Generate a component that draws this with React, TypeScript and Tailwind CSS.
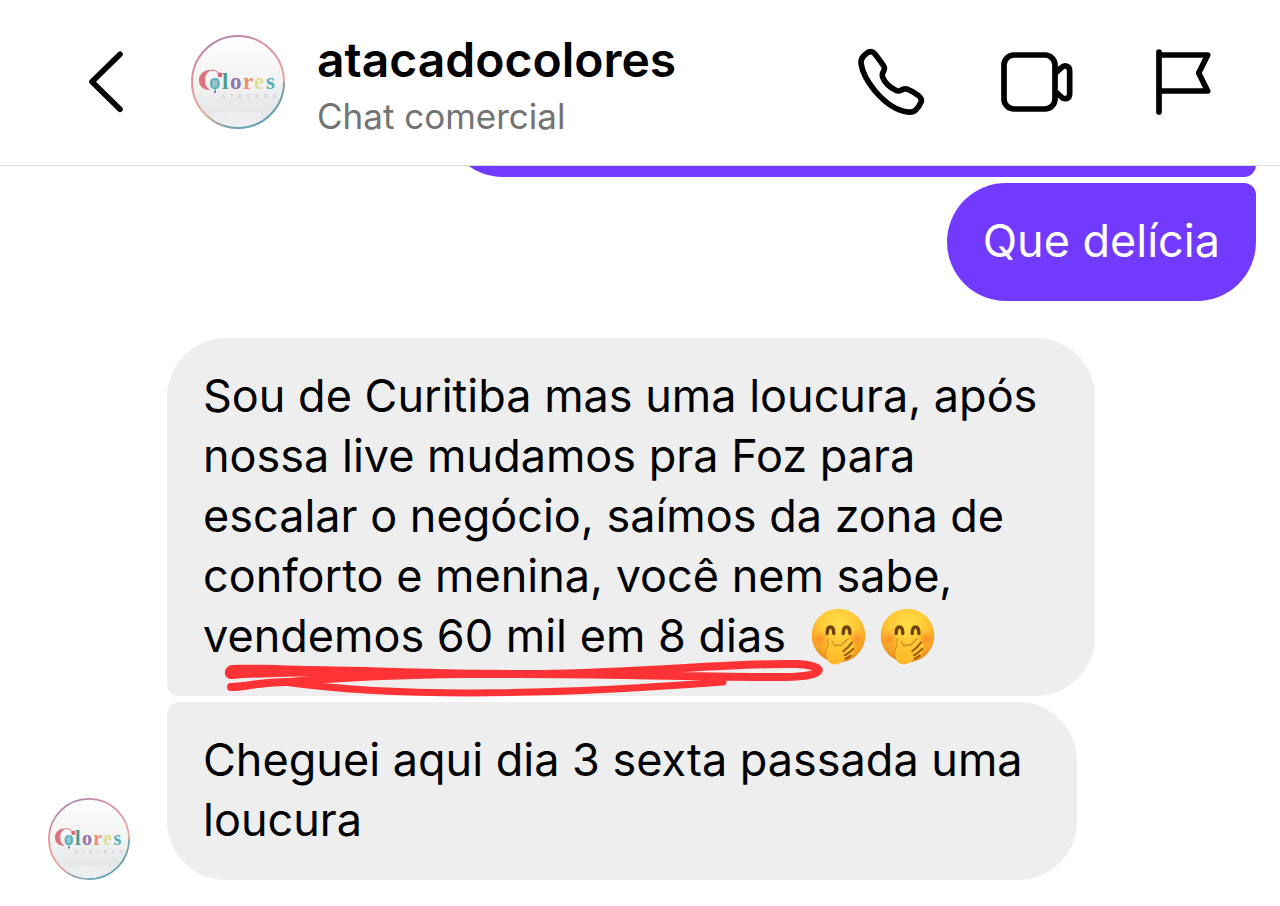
import { useId, type ReactNode } from "react";
import clsx from "clsx";

function Avatar({ className }: { className: string }) {
  const id = useId();

  return (
    <svg viewBox="0 0 94 94" className={clsx("shrink-0", className)} role="img" aria-label="Colores">
      <defs>
        <linearGradient id={`${id}ring`} x1="0.2" y1="0" x2="0.6" y2="1">
          <stop offset="0" stopColor="#a884b4" />
          <stop offset="0.25" stopColor="#dd8f9a" />
          <stop offset="0.7" stopColor="#e6a99a" />
          <stop offset="1" stopColor="#5fa3b5" />
        </linearGradient>
        <linearGradient id={`${id}sky`} x1="0" y1="0" x2="0" y2="1">
          <stop offset="0" stopColor="#fdfdfd" />
          <stop offset="0.5" stopColor="#f3f3f4" />
          <stop offset="0.8" stopColor="#e6e7e8" />
          <stop offset="1" stopColor="#eff0f1" />
        </linearGradient>
      </defs>
      <circle cx="47" cy="47" r="46" fill={`url(#${id}sky)`} stroke={`url(#${id}ring)`} strokeWidth="2" />
      <path d="M93 47A46 46 0 0 1 47 93" fill="none" stroke="#6ba5b4" strokeWidth="1.6" />
      <path
        d="M22 80c5-4 9-3 12-1 4-4 10-4 13 0 5-3 8-2 11 0 4-3 9-2 13 1-12 9-36 10-49 0z"
        fill="#f1f2f3"
        opacity="0.5"
      />
      <path d="M21 35C12 34 8 40 8 45c0 6 4 10 11 10-4-3-5-6-5-10 0-5 2-8 7-10z" fill="#e0717c" />
      <path d="M20 35c4 0 6 1 8 4" fill="none" stroke="#dd6470" strokeWidth="1" />
      <circle cx="29" cy="40" r="2.4" fill="#dd6470" />
      <text y="54" fontFamily="Liberation Serif, serif" fontWeight="bold" fontSize="23">
        <tspan x="18" fill="#5bb3c0">o</tspan>
        <tspan x="31" fill="#4e9a92">l</tspan>
        <tspan x="39" fill="#9273a9">o</tspan>
        <tspan x="52" fill="#ed8f6c">r</tspan>
        <tspan x="63" fill="#dfdf96">e</tspan>
        <tspan x="75" fill="#53b1bb">s</tspan>
      </text>
      <path d="M24 44v12" stroke="#4a9fb0" strokeWidth="1.2" />
      <circle cx="24" cy="57" r="1" fill="#456" />
      <text
        x="31 39 47 56 64 73 82"
        y="63"
        fontFamily="Liberation Sans, sans-serif"
        fontSize="5"
        fill="#c0c3ca"
      >
        ATACADO
      </text>
    </svg>
  );
}

function Icon({ children }: { children: ReactNode }) {
  return (
    <svg
      viewBox="0 0 216 216"
      className="size-[72px]"
      fill="none"
      stroke="#000"
      strokeWidth="17"
      strokeLinecap="round"
      strokeLinejoin="round"
      aria-hidden="true"
    >
      {children}
    </svg>
  );
}

function GiggleEmoji() {
  const id = useId();

  return (
    <svg viewBox="0 0 164 170" className="inline-block h-[57px] w-[55px]" role="img" aria-label="🤭">
      <defs>
        <radialGradient id={`${id}face`} cx="0.5" cy="0.3" r="0.7">
          <stop offset="0" stopColor="#ffe04a" />
          <stop offset="0.5" stopColor="#ffc935" />
          <stop offset="0.85" stopColor="#f6a023" />
          <stop offset="1" stopColor="#df8413" />
        </radialGradient>
        <radialGradient id={`${id}cheek`}>
          <stop offset="0" stopColor="#fb7b22" stopOpacity="0.7" />
          <stop offset="1" stopColor="#fb8b22" stopOpacity="0" />
        </radialGradient>
        <linearGradient id={`${id}hand`} x1="0.6" y1="0" x2="0.3" y2="1">
          <stop offset="0" stopColor="#ffcf3a" />
          <stop offset="1" stopColor="#ffb626" />
        </linearGradient>
      </defs>
      <circle cx="82" cy="82" r="80" fill={`url(#${id}face)`} />
      <circle cx="28" cy="92" r="27" fill={`url(#${id}cheek)`} />
      <circle cx="136" cy="92" r="27" fill={`url(#${id}cheek)`} />
      <path
        d="M48 76c0-26 20-26 20 0M96 76c0-26 20-26 20 0"
        fill="none"
        stroke="#704212"
        strokeWidth="10"
        strokeLinecap="round"
      />
      <path
        d="M53 90c-6 0-4 13-2 22-9 13-12 28-3 42 7 17 34 19 45 5 12-7 25-14 32-25 5-7-1-12-7-8 10-10 15-17 9-21-4-3-10 4-17 10 9-11 13-19 6-22-6-3-16 10-26 21-8-6-13-4-19-1-4-12-11-23-18-23z"
        fill={`url(#${id}hand)`}
      />
      <path d="M53 91c-5 3-3 13-1 20-9 13-12 28-4 42" fill="none" stroke="#d98a1c" strokeWidth="3" />
      <path d="M62 98c4 5 6 11 9 16 6-5 12-5 18-2 9-8 15-17 24-21" fill="none" stroke="#c98020" strokeWidth="3" />
      <path
        d="M122 103c-7 11-16 19-26 26M126 122c-7 8-16 14-25 19M118 142c-5 4-10 7-15 9"
        fill="none"
        stroke="#9a5a12"
        strokeWidth="6"
        strokeLinecap="round"
      />
    </svg>
  );
}

function MarkerUnderline() {
  return (
    <svg
      viewBox="220 655 610 45"
      className="absolute top-[317px] left-[53px] z-10 h-[45px] w-[610px]"
      fill="none"
      stroke="#ff3335"
      strokeWidth="8"
      strokeLinecap="round"
      strokeLinejoin="round"
      aria-hidden="true"
    >
      <path d="M231 671C320 667 430 675 540 674C640 673 730 663 795 664C829 665 827 677 785 677C700 677 600 674 520 674C430 673 340 677 290 682C260 681 250 687 231 687" />
      <path d="M284 682C390 697 540 696 723 682" strokeWidth="7" />
      <path
        d="M232 665C290 663 370 671 470 671V677C380 678 300 674 232 679C222 679 223 666 232 665Z"
        fill="#ff3335"
        stroke="none"
      />
    </svg>
  );
}

interface BubbleProps {
  className: string;
  children?: ReactNode;
}

function Bubble({ className, children }: BubbleProps) {
  return (
    <div className={clsx("relative px-9 pt-7 pb-[30px] text-[45px] leading-[60px]", className)}>
      {children}
    </div>
  );
}

export default function App() {
  return (
    <div className="min-h-screen bg-white font-['Inter',sans-serif] text-black">
      <header className="flex h-[166px] items-center border-b border-[#dcdcdc] pr-[61px] pb-[2px] pl-[70px]">
        <button type="button" aria-label="Voltar">
          <Icon>
            <path d="M150 25L66 107L150 190" />
          </Icon>
        </button>
        <Avatar className="ml-[49px] size-[94px]" />
        <div className="ml-8 min-w-0 flex-1 pt-1">
          <h1 className="text-[48px] leading-[64px] font-semibold">atacadocolores</h1>
          <p className="text-[35px] leading-[48px] text-[#737373]">Chat comercial</p>
        </div>
        <div className="flex shrink-0 gap-[74px]">
          <button type="button" aria-label="Ligar">
            <Icon>
              <path d="M48 17C55 17 61 25 66 32L85 58C90 65 89 70 86 75C82 82 80 87 83 94C90 110 105 124 121 132C127 136 132 136 138 133C145 128 151 128 158 130C169 134 179 140 188 147C199 155 201 161 198 169C194 179 188 187 181 193C176 198 168 199 158 198C125 194 90 170 60 135C38 108 22 80 18 52C17 38 25 29 35 22C40 18 44 17 48 17Z" />
            </Icon>
          </button>
          <button type="button" aria-label="Chamada de vídeo">
            <Icon>
              <rect x="9" y="27" width="153" height="162" rx="30" />
              <path d="M166 79L181 65C190 56 206 59 206 74V143C206 159 190 162 181 153L166 139" />
            </Icon>
          </button>
          <button type="button" aria-label="Denunciar">
            <Icon>
              <path d="M36 18V198M36 36Q38 27 48 27H182L155 81L182 135H48Q40 135 36 142" />
            </Icon>
          </button>
        </div>
      </header>

      <main className="flex flex-col">
        <div className="flex flex-col items-end gap-[6px] pr-6">
          <div className="flex h-[11px] w-full items-end justify-end overflow-hidden">
            <Bubble className="h-[118px] w-[812px] rounded-[59px] rounded-r-xl bg-[#7239ff]" />
          </div>
          <Bubble className="rounded-[59px] rounded-tr-xl bg-[#7239ff] text-white">Que delícia</Bubble>
        </div>

        <div className="mt-[37px] flex items-end gap-[37px] pl-12">
          <Avatar className="size-[82px]" />
          <div className="flex flex-1 flex-col gap-[6px]">
            <Bubble className="max-w-[928px] rounded-[59px] rounded-bl-xl bg-[#eeeeee]">
              Sou de Curitiba mas uma loucura, após nossa live mudamos pra Foz para escalar o negócio, saímos da
              zona de conforto e menina, você nem sabe, vendemos 60 mil em 8 dias{" "}
              <span className="ml-3 inline-flex h-[60px] items-center gap-[14px] align-bottom">
                <GiggleEmoji />
                <GiggleEmoji />
              </span>
              <MarkerUnderline />
            </Bubble>
            <Bubble className="max-w-[910px] rounded-[59px] rounded-tl-xl bg-[#eeeeee]">
              Cheguei aqui dia 3 sexta passada uma loucura
            </Bubble>
          </div>
        </div>
      </main>
    </div>
  );
}
